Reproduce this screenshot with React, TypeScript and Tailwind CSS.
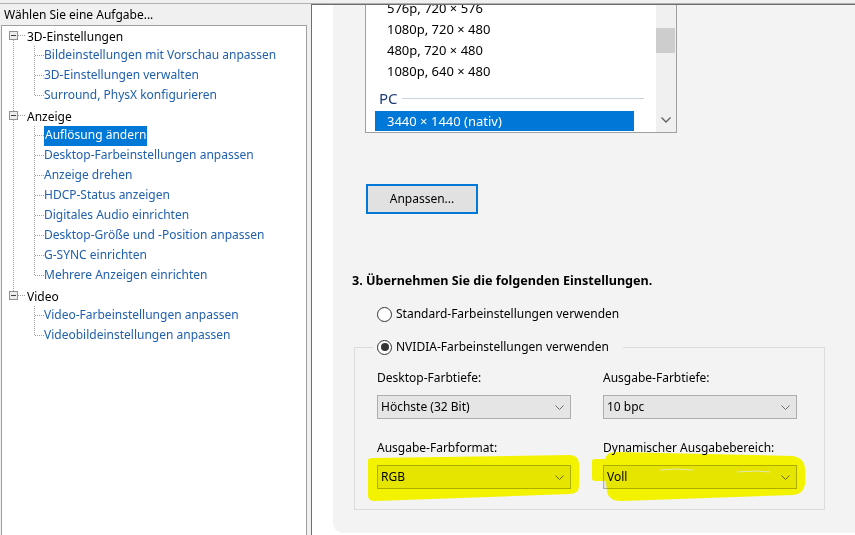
import React from "react";

interface TreeGroup {
  label: string;
  children: string[];
}

const tree: TreeGroup[] = [
  {
    label: "3D-Einstellungen",
    children: [
      "Bildeinstellungen mit Vorschau anpassen",
      "3D-Einstellungen verwalten",
      "Surround, PhysX konfigurieren",
    ],
  },
  {
    label: "Anzeige",
    children: [
      "Auflösung ändern",
      "Desktop-Farbeinstellungen anpassen",
      "Anzeige drehen",
      "HDCP-Status anzeigen",
      "Digitales Audio einrichten",
      "Desktop-Größe und -Position anpassen",
      "G-SYNC einrichten",
      "Mehrere Anzeigen einrichten",
    ],
  },
  {
    label: "Video",
    children: ["Video-Farbeinstellungen anpassen", "Videobildeinstellungen anpassen"],
  },
];

const SELECTED = "Auflösung ändern";

const dot = { stroke: "#a0a0a0", strokeWidth: 1, strokeDasharray: "1 1", shapeRendering: "crispEdges" as const };

function ParentRow({ label, first, last }: { label: string; first: boolean; last: boolean }) {
  return (
    <div className="flex h-[20px] items-center">
      <svg width="25" height="20" className="shrink-0">
        {!first && <line x1="11.5" y1="0" x2="11.5" y2="5" {...dot} />}
        {!last && <line x1="11.5" y1="14" x2="11.5" y2="20" {...dot} />}
        <line x1="16" y1="9.5" x2="24" y2="9.5" {...dot} />
        <rect x="7.5" y="5.5" width="8" height="8" fill="#ececec" stroke="#919191" shapeRendering="crispEdges" />
        <line x1="9" y1="9.5" x2="14" y2="9.5" stroke="#404040" shapeRendering="crispEdges" />
      </svg>
      <span className="translate-y-[1px] text-black">{label}</span>
    </div>
  );
}

function ChildRow({ label, parentLast, last }: { label: string; parentLast: boolean; last: boolean }) {
  const selected = label === SELECTED;
  return (
    <div className="flex h-[20px] items-center">
      <svg width="42" height="20" className="shrink-0">
        {!parentLast && <line x1="11.5" y1="0" x2="11.5" y2="20" {...dot} />}
        <line x1="32.5" y1="0" x2="32.5" y2={last ? 10 : 20} {...dot} />
        <line x1="33" y1="9.5" x2="42" y2="9.5" {...dot} />
      </svg>
      {selected ? (
        <span className="flex h-full items-center bg-[#0078d7] px-[1px] text-white">
          <span className="-translate-y-[1px]">{label}</span>
        </span>
      ) : (
        <span className="-translate-y-[1px] text-[#1f5fae]">{label}</span>
      )}
    </div>
  );
}

function Chevron() {
  return (
    <svg width="9" height="5" className="shrink-0">
      <polyline points="0.5,0.5 4.5,4.5 8.5,0.5" fill="none" stroke="#6a6a6a" strokeWidth="1" />
    </svg>
  );
}

function Radio({ checked }: { checked?: boolean }) {
  return (
    <span className="flex h-[15px] w-[15px] shrink-0 items-center justify-center rounded-full border border-[#333333] bg-white">
      {checked && <span className="h-[8px] w-[8px] rounded-full bg-[#333333]" />}
    </span>
  );
}

function Select({ value }: { value: string }) {
  return (
    <div className="flex h-[24px] w-[194px] items-center justify-between border border-[#adadad] bg-[#e5e5e5] pl-[3px] pr-[6px] text-black">
      <span>{value}</span>
      <Chevron />
    </div>
  );
}

const modes = ["576p, 720 × 576", "1080p, 720 × 480", "480p, 720 × 480", "1080p, 640 × 480"];

export default function App() {
  return (
    <div className="h-[535px] w-[855px] overflow-hidden bg-[#f0f0f0] pt-[3px] font-['Noto_Sans',sans-serif] text-[12px] leading-none text-black">
      <div className="flex h-[532px] border-t border-[#b0b0b0]">
        {/* Task tree */}
        <div className="flex w-[311px] shrink-0 flex-col pl-[1px] pr-[4px]">
          <div className="flex h-[21px] items-center px-[3px]">Wählen Sie eine Aufgabe...</div>
          <div className="flex-1 border-x border-t border-[#a0a0a0] bg-white">
            {tree.map((g, gi) => (
              <div key={g.label}>
                <ParentRow label={g.label} first={gi === 0} last={gi === tree.length - 1} />
                {g.children.map((c, ci) => (
                  <ChildRow
                    key={c}
                    label={c}
                    parentLast={gi === tree.length - 1}
                    last={ci === g.children.length - 1}
                  />
                ))}
              </div>
            ))}
          </div>
        </div>

        {/* Settings page */}
        <div className="flex flex-1 flex-col border-l border-t border-[#6e6e6e] bg-white">
          <div className="flex h-[528px] pl-[21px]">
            <div className="flex flex-1 flex-col rounded-bl-[10px] bg-[#f3f3f3]">
              {/* resolution list */}
              <div className="ml-[32px] flex h-[128px] w-[312px] border-x border-b border-[#a0a0a0] bg-white text-[13px]">
                <div className="flex-1 overflow-hidden">
                  <div className="-mt-[7px]">
                    {modes.map((m) => (
                      <div key={m} className="flex h-[21px] items-center pl-[21px]">
                        {m}
                      </div>
                    ))}
                    <div className="flex h-[29px] items-center pl-[13px] pr-[12px] pt-[4px]">
                      <span className="text-[15px] text-[#1e3c78]">PC</span>
                      <span className="ml-[4px] h-px flex-1 bg-[#c8d3e0]" />
                    </div>
                    <div className="ml-[9px] flex h-[20px] w-[259px] items-center bg-[#0078d7] pl-[12px] text-white">
                      3440 × 1440 (nativ)
                    </div>
                  </div>
                </div>
                <div className="flex w-[20px] flex-col bg-[#f0f0f0]">
                  <div className="mt-[23px] mr-[1px] h-[25px] bg-[#cdcdcd]" />
                  <div className="flex-1" />
                  <div className="flex h-[24px] items-center justify-center">
                    <svg width="10" height="6">
                      <polyline points="0.5,0.5 5,5 9.5,0.5" fill="none" stroke="#606060" strokeWidth="1.3" />
                    </svg>
                  </div>
                </div>
              </div>

              <button className="mt-[51px] ml-[33px] flex h-[30px] w-[112px] items-center justify-center border-2 border-[#0078d7] bg-[#e1e1e1] text-black">
                Anpassen...
              </button>

              <div className="mt-[59px] ml-[19px] flex h-[16px] items-center text-[12.6px] font-bold">
                3. Übernehmen Sie die folgenden Einstellungen.
              </div>

              <div className="mt-[17px] ml-[44px] flex h-[16px] items-center gap-[4px]">
                <Radio />
                <span>Standard-Farbeinstellungen verwenden</span>
              </div>

              {/* NVIDIA colour settings group */}
              <div className="relative mt-[25px] ml-[21px] h-[163px] w-[471px] border border-[#dcdcdc]">
                <div className="-mt-[9px] ml-[18px] flex h-[16px] w-fit items-center gap-[4px] bg-[#f3f3f3] pl-[4px] pr-[14px]">
                  <Radio checked />
                  <span>NVIDIA-Farbeinstellungen verwenden</span>
                </div>
                <div className="mt-[15px] flex gap-[32px] pl-[22px]">
                  <div className="flex flex-col">
                    <span className="flex h-[16px] items-center">Desktop-Farbtiefe:</span>
                    <div className="mt-[9px]">
                      <Select value="Höchste (32 Bit)" />
                    </div>
                    <span className="mt-[21px] flex h-[16px] items-center">Ausgabe-Farbformat:</span>
                    <div className="mt-[9px]">
                      <Select value="RGB" />
                    </div>
                  </div>
                  <div className="flex flex-col">
                    <span className="flex h-[16px] items-center">Ausgabe-Farbtiefe:</span>
                    <div className="mt-[9px]">
                      <Select value="10 bpc" />
                    </div>
                    <span className="mt-[21px] flex h-[16px] items-center">Dynamischer Ausgabebereich:</span>
                    <div className="mt-[9px]">
                      <Select value="Voll" />
                    </div>
                  </div>
                </div>

                {/* highlighter marks */}
                <svg className="pointer-events-none absolute inset-0 mix-blend-multiply" width="469" height="161">
                  <path
                    d="M13,112 Q13,110 18,110 L214,107 Q224,107 224,116 L224,138 Q224,146 214,146 L20,153 Q13,153 13,148 Z"
                    fill="#ffff00"
                  />
                  <path
                    d="M237,113 Q237,111 240,111 L250,111 Q252,104 260,104 L438,108 Q450,110 450,122 L450,136 Q449,146 438,147 L266,153 Q254,153 252,144 L251,133 L240,133 Q237,133 237,130 Z"
                    fill="#ffff00"
                  />
                  <path d="M305,122 L322,121 L338,122" fill="none" stroke="#ffffff" strokeWidth="1" opacity="0.8" />
                  <path d="M382,124 L400,123 L415,124" fill="none" stroke="#ffffff" strokeWidth="1" opacity="0.8" />
                </svg>
              </div>
            </div>
          </div>
        </div>
      </div>
    </div>
  );
}
